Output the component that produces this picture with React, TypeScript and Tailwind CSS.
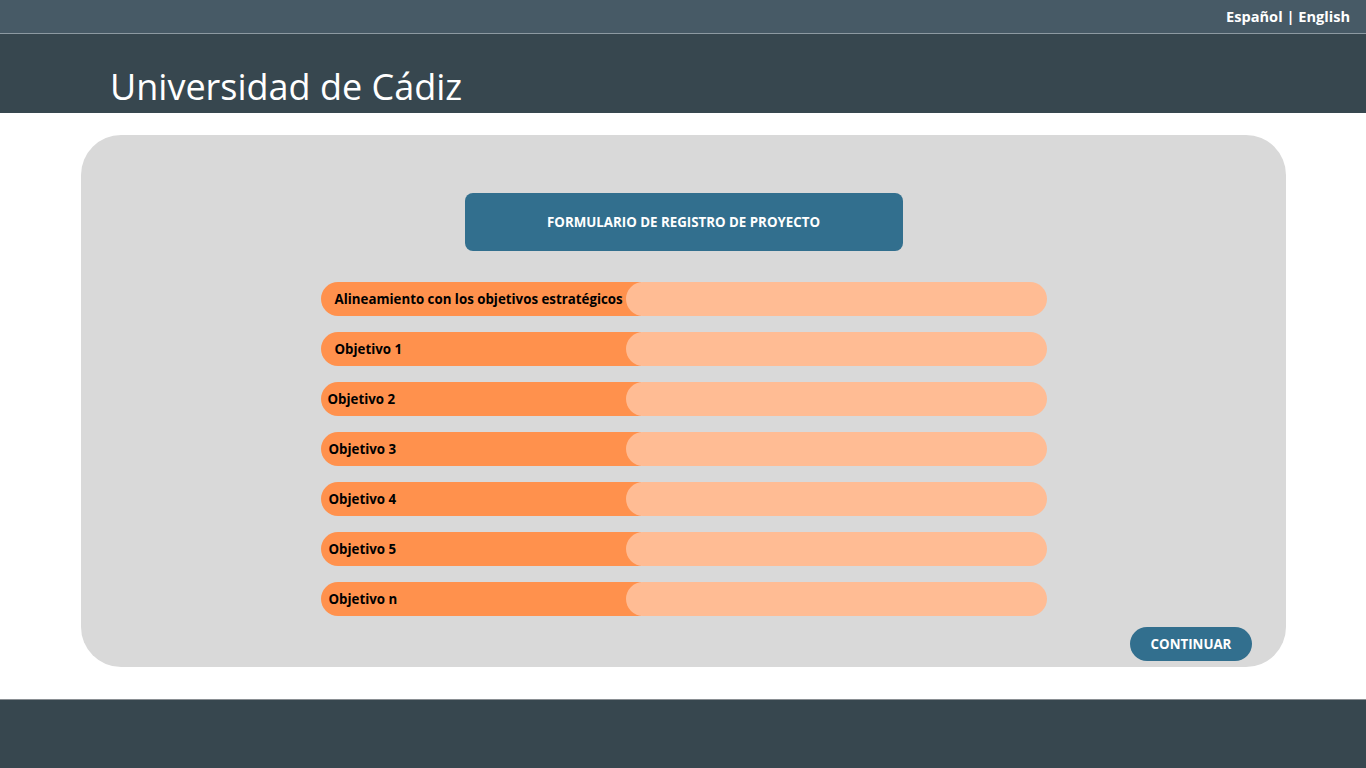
const rows = [
  { label: "Alineamiento con los objetivos estratégicos", pad: "pl-[14px]" },
  { label: "Objetivo 1", pad: "pl-[14px]" },
  { label: "Objetivo 2", pad: "pl-[7px]" },
  { label: "Objetivo 3", pad: "pl-[8px]" },
  { label: "Objetivo 4", pad: "pl-[8px]" },
  { label: "Objetivo 5", pad: "pl-[8px]" },
  { label: "Objetivo n", pad: "pl-[8px]" },
];

export default function App() {
  return (
    <div className="flex min-h-[768px] flex-col bg-white font-['Open_Sans',sans-serif]">
      <div className="flex h-[34px] items-center justify-end border-b border-[#8d9aa2] bg-[#475a66] pr-4">
        <span className="text-[14.6px] font-bold text-white">Español | English</span>
      </div>
      <header className="flex h-[79px] items-end bg-[#37474f] pb-[2px] pl-[110px]">
        <h1 className="text-[36px] leading-[48px] text-white">Universidad de Cádiz</h1>
      </header>

      <main className="flex-1 pb-[32px] pl-[81px] pr-[80px] pt-[22px]">
        <div className="flex h-[532px] flex-col items-center rounded-[40px] bg-[#d9d9d9] pt-[58px]">
          <div className="flex h-[58px] w-[438px] items-center justify-center rounded-[8px] bg-[#326f8e] pt-[1px] text-[13.3px] font-bold text-white">
            FORMULARIO DE REGISTRO DE PROYECTO
          </div>

          <div className="mt-[31px] flex w-[726px] flex-col gap-[16px]">
            {rows.map((r) => (
              <div key={r.label} className="flex h-[34px] w-full">
                <div className={`flex w-[320px] shrink-0 items-center rounded-l-full bg-[#ff914d] pt-[2px] ${r.pad}`}>
                  <span className="whitespace-nowrap text-[13.3px] font-bold text-black">{r.label}</span>
                </div>
                <div className="-ml-[15px] flex-1 rounded-full bg-[#ffbc94]" />
              </div>
            ))}
          </div>

          <div className="mt-[11px] flex w-full justify-end pr-[34px]">
            <button className="flex h-[34px] w-[122px] items-center justify-center rounded-full bg-[#326f8e] pt-[2px] text-[13.3px] font-bold text-white">
              CONTINUAR
            </button>
          </div>
        </div>
      </main>

      <footer className="h-[69px] border-t border-[#8a8f93] bg-[#37474f]" />
    </div>
  );
}
